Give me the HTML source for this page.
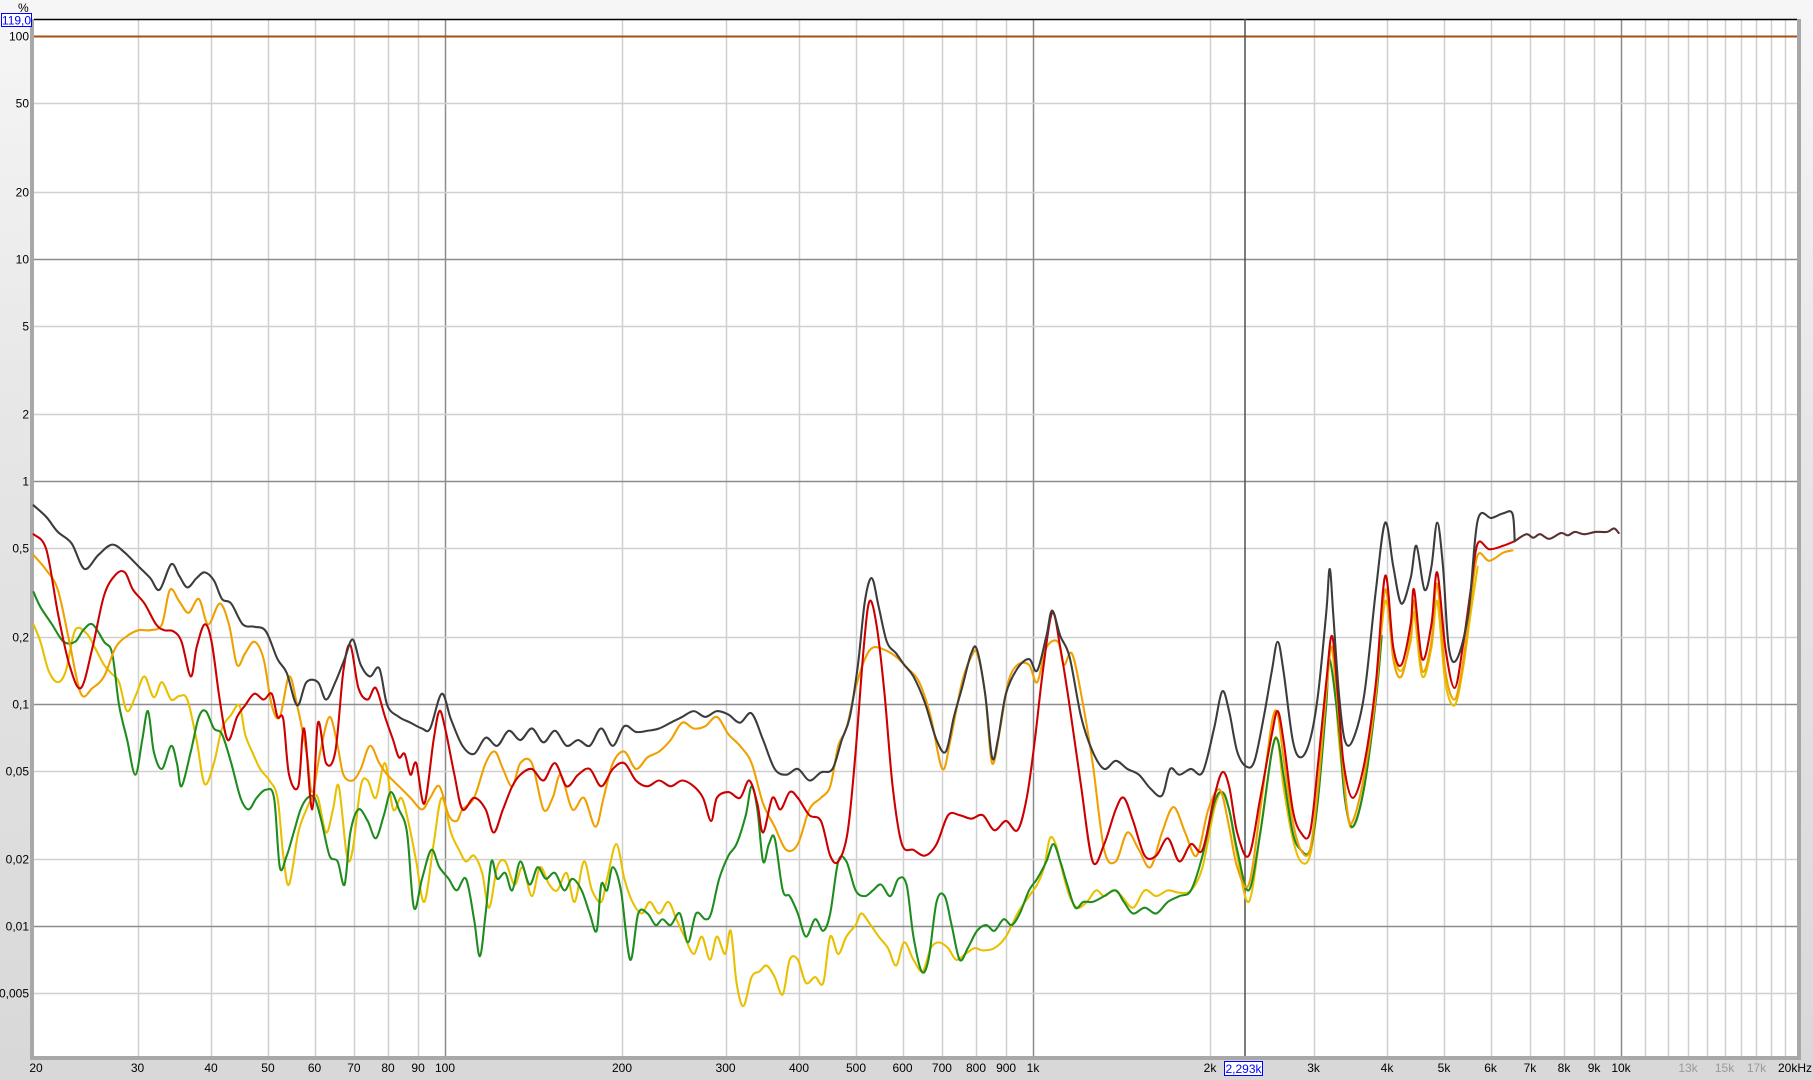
<!DOCTYPE html>
<html><head><meta charset="utf-8">
<style>
html,body{margin:0;padding:0;width:1813px;height:1080px;overflow:hidden;font-family:"Liberation Sans",Arial,sans-serif;background:linear-gradient(#f6f6f6,#e6e6e6 40%,#d8d8d8);}
#wrap{position:relative;width:1813px;height:1080px;}
svg{position:absolute;left:0;top:0;}
</style></head><body><div id="wrap">
<svg id="g" width="1813" height="1080" viewBox="0 0 1813 1080"></svg>
<svg id="c" width="1813" height="1080" viewBox="0 0 1568 934"></svg>
</div>
<script>
var NS="http://www.w3.org/2000/svg";
function el(p,t,a,txt){var e=document.createElementNS(NS,t);for(var k in a)e.setAttribute(k,a[k]);if(txt!=null)e.textContent=txt;p.appendChild(e);return e;}
var g=document.getElementById('g');
function X(f){return 34+Math.log10(f/20)*588;}
function Y(v){return 36+(2-Math.log10(v))*222.6;}
var L=34,R=1797,T=19,B=1056;
el(g,'rect',{x:L-4,y:T,width:R-L+8,height:B-T+4,fill:'#a8a8a8'});
el(g,'rect',{x:L,y:T,width:R-L,height:B-T,fill:'#fff'});
var fs=[30,40,50,60,70,80,90,100,200,300,400,500,600,700,800,900,1000,2000,3000,4000,5000,6000,7000,8000,9000,10000,11000,12000,13000,14000,15000,16000,17000,18000,19000];
fs.forEach(function(f){var x=Math.round(X(f))+0.5;var maj=(f==100||f==1000||f==10000);
el(g,'line',{x1:x,y1:T,x2:x,y2:B,stroke:maj?'#8c8c8c':'#d0d0d0','stroke-width':1.5});});
var vs=[[100,'100'],[50,'50'],[20,'20'],[10,'10'],[5,'5'],[2,'2'],[1,'1'],[0.5,'0,5'],[0.2,'0,2'],[0.1,'0,1'],[0.05,'0,05'],[0.02,'0,02'],[0.01,'0,01'],[0.005,'0,005']];
vs.forEach(function(v){var y=Math.round(Y(v[0]))+0.5;var maj=(v[0]==10||v[0]==1||v[0]==0.1||v[0]==0.01);
el(g,'line',{x1:L,y1:y,x2:R,y2:y,stroke:maj?'#8c8c8c':'#d0d0d0','stroke-width':1.5});
el(g,'text',{x:29,y:y+4,'text-anchor':'end','font-size':12,fill:'#000'},v[1]);});
el(g,'line',{x1:L,y1:T+0.5,x2:R,y2:T+0.5,stroke:'#000','stroke-width':1.5});
el(g,'line',{x1:L,y1:Math.round(Y(100))+0.5,x2:R,y2:Math.round(Y(100))+0.5,stroke:'#a0501a','stroke-width':2});
el(g,'line',{x1:1245,y1:T,x2:1245,y2:B,stroke:'#505050','stroke-width':1.5});
var xl=[[20,'20'],[30,'30'],[40,'40'],[50,'50'],[60,'60'],[70,'70'],[80,'80'],[90,'90'],[100,'100'],[200,'200'],[300,'300'],[400,'400'],[500,'500'],[600,'600'],[700,'700'],[800,'800'],[900,'900'],[1000,'1k'],[2000,'2k'],[3000,'3k'],[4000,'4k'],[5000,'5k'],[6000,'6k'],[7000,'7k'],[8000,'8k'],[9000,'9k'],[10000,'10k'],[13000,'13k'],[15000,'15k'],[17000,'17k']];
xl.forEach(function(v){var gray=v[0]>=13000;el(g,'text',{x:X(v[0])+(v[0]==20?2:0),y:1072,'text-anchor':'middle','font-size':12,fill:gray?'#999':'#000'},v[1]);});
el(g,'text',{x:1812,y:1072,'text-anchor':'end','font-size':12,fill:'#000'},'20kHz');
el(g,'text',{x:18,y:12,'font-size':12,fill:'#000'},'%');
el(g,'rect',{x:1.5,y:13.5,width:30,height:13,fill:'#fff',stroke:'#0000ff','stroke-width':1});
el(g,'text',{x:16.5,y:24.5,'text-anchor':'middle','font-size':12,fill:'#0000ff'},'119,0');
el(g,'rect',{x:1224.5,y:1061.5,width:38,height:14,fill:'#fff',stroke:'#0000ff','stroke-width':1});
el(g,'text',{x:1243.5,y:1073,'text-anchor':'middle','font-size':12,fill:'#0000ff'},'2,293k');

var c=document.getElementById('c');
function P(s,col,w){
 var p=s.trim().split(/\s+/).map(function(q){var a=q.split(',');return [+a[0],+a[1]];});
 var d='M'+p[0][0]+','+p[0][1];
 for(var i=0;i<p.length-1;i++){
  var p0=p[i-1]||p[i],p1=p[i],p2=p[i+1],p3=p[i+2]||p2;
  var c1x=p1[0]+(p2[0]-p0[0])/6,c1y=p1[1]+(p2[1]-p0[1])/6,c2x=p2[0]-(p3[0]-p1[0])/6,c2y=p2[1]-(p3[1]-p1[1])/6;
  d+=' C'+c1x.toFixed(1)+','+c1y.toFixed(1)+' '+c2x.toFixed(1)+','+c2y.toFixed(1)+' '+p2[0]+','+p2[1];
 }
 el(c,'path',{d:d,fill:'none',stroke:col,'stroke-width':w||1.8,'stroke-linejoin':'round','stroke-linecap':'round'});}
var yellow="29,540 35,555 42,580 50,590 57,580 65,545 75,548 82,560 90,575 97,583 103,590 110,615 118,600 125,585 133,603 140,590 148,605 155,602 162,605 170,640 177,678 185,660 192,630 200,618 207,610 212,635 218,650 225,665 233,675 240,690 245,740 250,765 258,720 265,700 270,690 275,690 282,720 288,700 293,680 300,740 305,735 312,680 318,675 325,690 333,660 340,700 347,690 353,710 360,745 367,780 375,730 382,690 390,720 397,735 403,745 410,740 417,755 423,785 430,750 437,745 445,765 452,750 460,775 467,750 475,765 482,770 490,755 497,780 505,745 512,770 520,780 525,760 533,730 540,760 547,780 555,790 562,780 570,790 578,780 585,795 592,810 600,825 607,810 614,830 620,810 627,825 632,805 637,850 643,870 650,845 657,840 663,835 670,845 677,860 683,830 690,830 697,850 705,845 712,850 718,810 725,825 732,810 740,800 745,790 753,800 760,810 768,820 775,835 782,815 790,830 798,840 805,820 812,815 820,820 827,830 835,825 843,820 850,822 860,820 870,810 880,790 890,775 897,765 903,750 908,725 913,730 918,750 925,775 932,785 940,780 948,770 955,775 963,770 970,775 980,785 990,770 1000,775 1010,770 1020,772 1030,770 1040,750 1050,700 1057,685 1063,700 1070,740 1080,780 1090,720 1100,650 1105,640 1110,680 1118,725 1125,745 1133,740 1140,690 1147,600 1152,560 1158,640 1165,700 1170,715 1180,680 1190,600 1198,520 1205,565 1212,580 1220,555 1223,530 1230,585 1238,560 1243,520 1250,590 1258,610 1265,580 1272,530 1278,490";
var green="29,512 35,525 45,540 55,555 65,555 72,545 80,540 90,555 97,565 103,610 110,640 117,670 123,640 128,615 133,650 140,665 148,645 153,660 157,680 165,650 172,620 178,615 185,630 192,635 200,660 208,690 215,700 222,690 230,683 237,690 242,750 248,740 254,720 260,700 266,690 272,690 278,710 285,740 292,745 298,765 303,720 310,700 318,710 325,725 332,705 338,685 345,700 352,720 358,785 365,760 373,735 380,750 388,760 395,770 403,760 410,795 415,827 420,790 425,745 430,760 437,755 443,770 450,745 458,765 465,750 472,760 480,755 488,770 495,760 503,770 510,790 516,805 520,765 525,770 530,750 537,770 545,830 552,790 560,790 567,800 573,795 580,800 588,790 595,815 602,790 610,795 615,790 622,760 630,740 637,730 645,705 650,680 655,700 660,745 665,730 670,725 677,770 683,775 690,790 697,810 705,795 712,805 718,790 725,745 732,745 740,770 748,775 755,770 762,765 770,775 777,760 784,765 790,810 797,840 803,830 810,780 817,775 823,800 830,830 837,820 845,805 853,800 860,805 868,795 875,800 882,790 890,770 897,760 905,745 911,730 917,745 923,765 930,785 937,780 945,780 955,775 965,770 972,780 980,790 990,785 1000,790 1010,780 1020,775 1030,770 1040,740 1050,695 1057,685 1063,700 1070,735 1080,770 1090,720 1100,650 1105,640 1110,670 1118,720 1125,735 1133,735 1140,690 1147,610 1150,570 1158,630 1163,690 1170,715 1180,680 1190,605 1195,550";
var orange="29,480 40,493 50,510 60,555 70,600 80,595 90,585 100,560 110,550 120,545 130,545 140,540 147,510 155,520 163,530 172,518 180,540 190,522 198,540 205,575 212,565 220,555 228,570 235,610 242,620 250,585 257,610 265,650 270,685 277,650 285,620 292,645 297,670 305,675 312,665 320,645 328,660 335,670 345,680 355,690 365,700 372,690 380,680 388,705 395,710 400,700 410,690 420,660 428,650 435,665 443,680 450,660 460,660 470,700 478,690 485,670 495,700 505,690 515,715 522,690 530,660 540,650 550,665 560,655 570,650 580,640 590,625 600,630 610,628 620,620 630,635 640,645 650,660 660,695 670,715 680,735 690,730 700,700 710,690 718,680 725,645 732,630 740,595 748,570 755,560 765,562 775,568 785,578 795,590 805,620 815,665 822,640 832,590 840,568 845,565 852,600 858,660 865,630 872,590 880,575 890,575 897,590 905,560 915,555 920,575 927,565 935,600 945,660 955,735 965,745 975,720 985,735 995,750 1005,720 1015,698 1025,720 1035,740 1045,700 1055,683 1063,715 1070,750 1080,765 1090,700 1100,625 1105,618 1110,655 1118,710 1125,735 1133,735 1140,680 1147,600 1152,560 1158,620 1165,700 1170,710 1180,670 1190,600 1198,510 1205,570 1212,585 1220,550 1223,520 1230,580 1238,555 1243,505 1250,580 1258,605 1265,575 1272,520 1278,480 1288,485 1300,478 1308,476";
var red="29,462 40,475 50,530 60,575 70,595 80,560 90,515 100,497 108,495 115,510 125,522 135,540 142,545 150,546 157,555 165,585 170,560 177,540 183,555 190,605 197,640 205,620 212,610 220,600 228,605 235,600 240,620 245,622 250,670 258,680 263,630 270,700 275,625 282,660 290,650 297,580 303,558 310,595 318,605 325,595 333,620 340,640 345,655 350,652 355,670 360,660 367,695 375,640 380,615 385,630 393,670 400,700 410,690 420,700 427,720 435,700 443,680 450,670 460,665 470,675 480,660 490,680 500,670 510,665 520,680 530,665 540,660 550,675 560,680 570,675 580,680 590,675 600,680 608,690 615,710 620,690 630,685 640,690 648,675 655,695 660,720 668,690 675,700 683,685 690,690 700,705 710,710 718,740 725,745 733,720 740,650 747,560 752,520 758,540 765,600 772,680 780,730 790,735 800,740 810,730 820,705 830,705 840,708 850,705 860,718 870,710 880,718 888,690 895,640 902,580 910,530 917,560 925,610 935,680 945,745 955,730 965,700 972,690 980,710 990,740 1000,740 1010,725 1020,745 1030,730 1040,735 1050,690 1057,668 1063,680 1070,720 1080,740 1090,690 1100,635 1105,615 1110,640 1118,700 1125,720 1133,720 1140,660 1147,590 1152,550 1157,600 1162,660 1170,690 1180,660 1190,590 1198,498 1205,560 1212,575 1220,540 1223,510 1230,570 1238,540 1243,495 1250,560 1258,595 1265,560 1272,510 1278,470 1288,475 1300,472 1310,468";
var black="29,437 40,447 50,460 62,470 73,492 85,480 97,471 108,478 120,490 130,500 138,510 148,488 155,498 162,508 170,500 177,495 185,502 192,518 200,522 210,540 220,542 230,546 240,570 248,582 257,610 265,590 275,590 282,605 290,590 298,570 305,553 312,575 320,585 328,578 335,610 345,620 355,625 365,630 372,630 382,600 390,622 400,645 410,652 420,638 430,645 440,632 450,640 460,630 470,642 480,632 490,645 500,640 510,645 520,630 530,645 540,628 550,633 560,632 570,630 580,625 590,620 600,615 610,620 620,615 630,618 640,625 650,617 660,640 670,665 680,670 690,665 700,675 710,668 720,665 728,640 735,620 742,575 748,520 754,500 760,525 767,555 775,565 782,575 790,585 800,608 810,640 818,650 825,620 832,595 840,565 845,562 852,600 858,655 863,640 870,600 880,578 890,570 897,580 905,550 910,528 917,550 925,568 935,620 945,650 955,665 965,658 975,665 985,670 995,682 1005,688 1012,665 1020,670 1030,665 1040,668 1050,630 1057,598 1063,615 1070,650 1078,663 1085,658 1093,620 1100,580 1105,555 1110,580 1118,640 1125,655 1133,640 1140,600 1147,530 1150,492 1153,530 1158,600 1163,640 1170,640 1180,600 1190,510 1198,452 1205,490 1212,522 1220,500 1225,472 1232,510 1238,490 1243,452 1248,490 1253,560 1260,570 1270,530 1278,450 1290,448 1300,444 1308,444 1310,468";
var tail="1310,468 1320,462 1326,465 1332,462 1340,466 1350,461 1356,463 1362,460 1370,462 1380,460 1390,460 1396,457 1400,461";
P(yellow,'#e8c000');P(green,'#1e8c1e');P(orange,'#f0a000');P(red,'#cc0000');P(black,'#3c3c3c');P(tail,'#5a3030');
</script>
</body></html>
